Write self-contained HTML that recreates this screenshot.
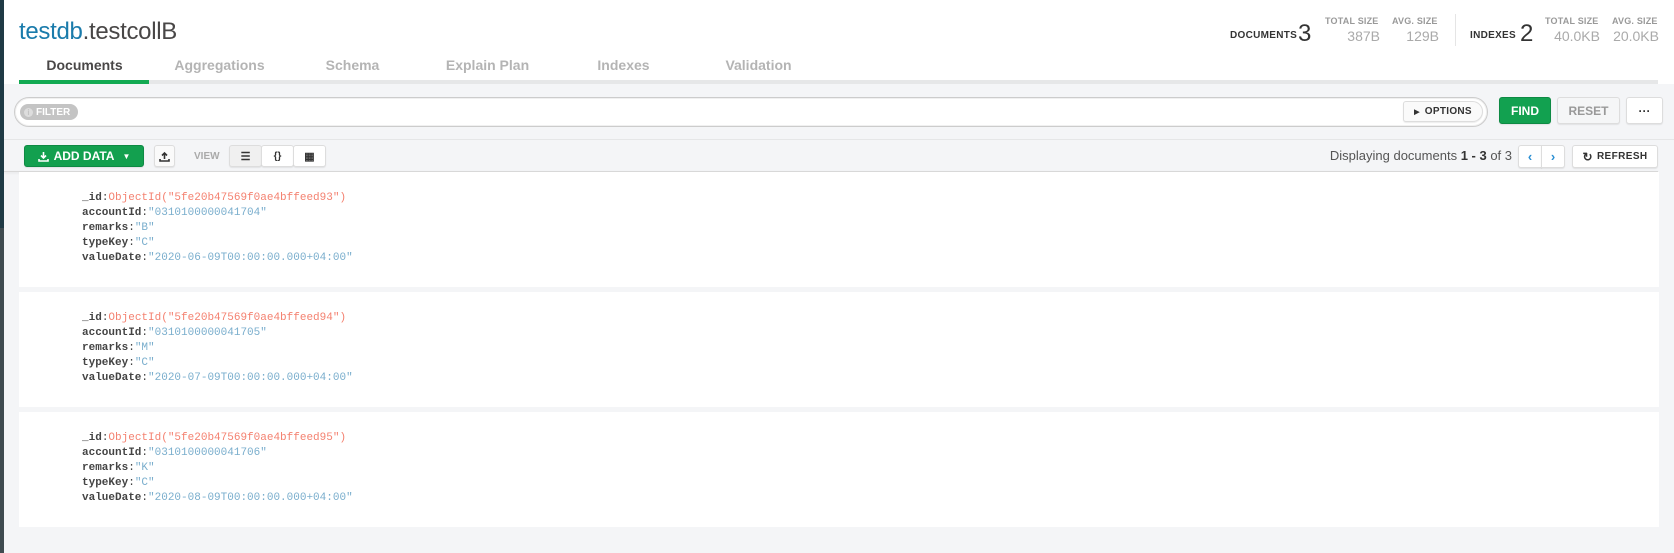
<!DOCTYPE html>
<html><head><meta charset="utf-8"><style>
*{box-sizing:border-box;margin:0;padding:0}
body{width:1674px;height:553px;overflow:hidden;background:#f4f5f7;font-family:"Liberation Sans",sans-serif;position:relative}
.a{position:absolute}
.hdr{left:0;top:0;width:1674px;height:84px;background:#fff}
.leftbar{left:0;top:0;width:4px;height:553px;background:#3f4b50}
.leftbar2{left:0;top:0;width:4px;height:228px;background:#1f3a45}
.title{left:19px;top:18px;font-size:24px;color:#494747;letter-spacing:-0.3px}
.title span{color:#1a7bab}
.tab{top:57px;font-size:14px;font-weight:bold;color:#b4b4b4;width:135px;text-align:center}
.lbl{font-size:9px;color:#999;font-weight:bold;letter-spacing:0.2px}
.val{font-size:14px;color:#aaa}
.big{font-size:24px;color:#333}
.cap{font-size:10px;font-weight:bold;color:#333;letter-spacing:0.3px}
.btn{border:1px solid #ddd;border-radius:3px;background:#fafafa;box-shadow:0 1px 1px rgba(0,0,0,.08);display:flex;align-items:center;justify-content:center;font-weight:bold;color:#333}
.card{left:19px;width:1640px;background:#fff}
.code{font-family:"Liberation Mono",monospace;font-size:11px;line-height:15px;color:#444;left:82px}
.code b{font-weight:bold}
.oid{color:#f48170}.str{color:#7aaecd}
</style></head><body>
<div class="a hdr"></div>
<div class="a leftbar"></div><div class="a leftbar2"></div>
<div class="a title"><span>testdb</span>.testcollB</div>

<div class="a tab" style="left:17px;color:#494747">Documents</div>
<div class="a tab" style="left:152px">Aggregations</div>
<div class="a tab" style="left:285px">Schema</div>
<div class="a tab" style="left:420px">Explain Plan</div>
<div class="a tab" style="left:556px">Indexes</div>
<div class="a tab" style="left:691px">Validation</div>
<div class="a" style="left:19px;top:80px;width:1639px;height:4px;background:#e6e7e8"></div>
<div class="a" style="left:19px;top:80px;width:130px;height:4px;background:#13aa52"></div>

<div class="a cap" style="left:1230px;top:30px">DOCUMENTS</div>
<div class="a big" style="left:1298px;top:20px">3</div>
<div class="a lbl" style="left:1325px;top:16px">TOTAL SIZE</div>
<div class="a val" style="left:1325px;top:28px;width:55px;text-align:right">387B</div>
<div class="a lbl" style="left:1392px;top:16px">AVG. SIZE</div>
<div class="a val" style="left:1390px;top:28px;width:49px;text-align:right">129B</div>
<div class="a" style="left:1455px;top:14px;width:1px;height:32px;background:#e5e5e5"></div>
<div class="a cap" style="left:1470px;top:30px">INDEXES</div>
<div class="a big" style="left:1520px;top:20px">2</div>
<div class="a lbl" style="left:1545px;top:16px">TOTAL SIZE</div>
<div class="a val" style="left:1535px;top:28px;width:65px;text-align:right">40.0KB</div>
<div class="a lbl" style="left:1612px;top:16px">AVG. SIZE</div>
<div class="a val" style="left:1594px;top:28px;width:65px;text-align:right">20.0KB</div>

<div class="a" style="left:14px;top:97px;width:1474px;height:30px;border:1px solid #ccc;border-radius:15px;background:#fff;box-shadow:inset 0 0 0 1px #f0f0f0"></div>
<div class="a" style="left:20px;top:104px;width:58px;height:16px;border-radius:8px;background:#c4c4c4;color:#fff;font-size:10px;font-weight:bold;display:flex;align-items:center;padding-left:4px"><span style="display:inline-block;width:9px;height:9px;border-radius:50%;background:#ddd;color:#c4c4c4;font-size:8px;line-height:9px;text-align:center;margin-right:3px">i</span>FILTER</div>
<div class="a btn" style="left:1403px;top:101px;width:80px;height:21px;font-size:10px;letter-spacing:0.3px;border-radius:3px 11px 11px 3px"><span style="font-size:7px;margin-right:5px">▶</span>OPTIONS</div>
<div class="a btn" style="left:1499px;top:97px;width:52px;height:27px;background:#12a150;border-color:#0e8a44;color:#fff;font-size:12px">FIND</div>
<div class="a btn" style="left:1557px;top:97px;width:63px;height:27px;color:#999;font-size:12px;background:#f5f6f7">RESET</div>
<div class="a btn" style="left:1626px;top:97px;width:37px;height:27px;font-size:12px;background:#fff">···</div>
<div class="a" style="left:4px;top:139px;width:1670px;height:1px;background:#e5e6e7"></div>

<div class="a btn" style="left:24px;top:145px;width:120px;height:22px;background:#13a04f;border-color:#0e8a44;color:#fff;font-size:12px"><svg width="11" height="11" viewBox="0 0 11 11" style="margin-right:5px"><path d="M5.5 1v6M3 4.5l2.5 2.5 2.5-2.5M1 8v2h9V8" stroke="#fff" stroke-width="1.6" fill="none"/></svg>ADD DATA<span style="font-size:8px;margin-left:8px">▼</span></div>
<div class="a btn" style="left:154px;top:145px;width:21px;height:22px"><svg width="11" height="11" viewBox="0 0 11 11"><path d="M5.5 8V2M3 4.5L5.5 2 8 4.5M1 8v2h9V8" stroke="#333" stroke-width="1.6" fill="none"/></svg></div>
<div class="a" style="left:194px;top:151px;font-size:10px;font-weight:bold;color:#aaa">VIEW</div>
<div class="a btn" style="left:229px;top:145px;width:33px;height:22px;background:#f0f0f0;font-size:11px">☰</div>
<div class="a btn" style="left:261px;top:145px;width:33px;height:22px;background:#fff;font-size:10px">{}</div>
<div class="a btn" style="left:293px;top:145px;width:33px;height:22px;background:#fff;font-size:11px">▦</div>
<div class="a" style="left:1225px;top:148px;width:287px;text-align:right;font-size:13px;color:#555">Displaying documents <b style="color:#333">1 - 3</b> of 3</div>
<div class="a btn" style="left:1518px;top:145px;width:24px;height:23px;background:#fff;color:#2a8fd3;border-radius:3px 0 0 3px;font-size:13px">‹</div>
<div class="a btn" style="left:1541px;top:145px;width:24px;height:23px;background:#fff;color:#2a8fd3;border-radius:0 3px 3px 0;font-size:13px">›</div>
<div class="a btn" style="left:1572px;top:145px;width:86px;height:23px;background:#fff;font-size:10px;letter-spacing:0.4px"><span style="font-size:12px;margin-right:4px">↻</span>REFRESH</div>
<div class="a" style="left:4px;top:171px;width:1654px;height:1px;background:#d8d8d8;box-shadow:0 1px 2px rgba(0,0,0,.1)"></div>

<div class="a card" style="top:172px;height:115px"></div>
<div class="a card" style="top:292px;height:115px"></div>
<div class="a card" style="top:412px;height:115px"></div>

<div class="a code" style="top:191px">
<b>_id</b>:<span class="oid">ObjectId("5fe20b47569f0ae4bffeed93")</span><br>
<b>accountId</b>:<span class="str">"0310100000041704"</span><br>
<b>remarks</b>:<span class="str">"B"</span><br>
<b>typeKey</b>:<span class="str">"C"</span><br>
<b>valueDate</b>:<span class="str">"2020-06-09T00:00:00.000+04:00"</span></div>
<div class="a code" style="top:311px">
<b>_id</b>:<span class="oid">ObjectId("5fe20b47569f0ae4bffeed94")</span><br>
<b>accountId</b>:<span class="str">"0310100000041705"</span><br>
<b>remarks</b>:<span class="str">"M"</span><br>
<b>typeKey</b>:<span class="str">"C"</span><br>
<b>valueDate</b>:<span class="str">"2020-07-09T00:00:00.000+04:00"</span></div>
<div class="a code" style="top:431px">
<b>_id</b>:<span class="oid">ObjectId("5fe20b47569f0ae4bffeed95")</span><br>
<b>accountId</b>:<span class="str">"0310100000041706"</span><br>
<b>remarks</b>:<span class="str">"K"</span><br>
<b>typeKey</b>:<span class="str">"C"</span><br>
<b>valueDate</b>:<span class="str">"2020-08-09T00:00:00.000+04:00"</span></div>
</body></html>
